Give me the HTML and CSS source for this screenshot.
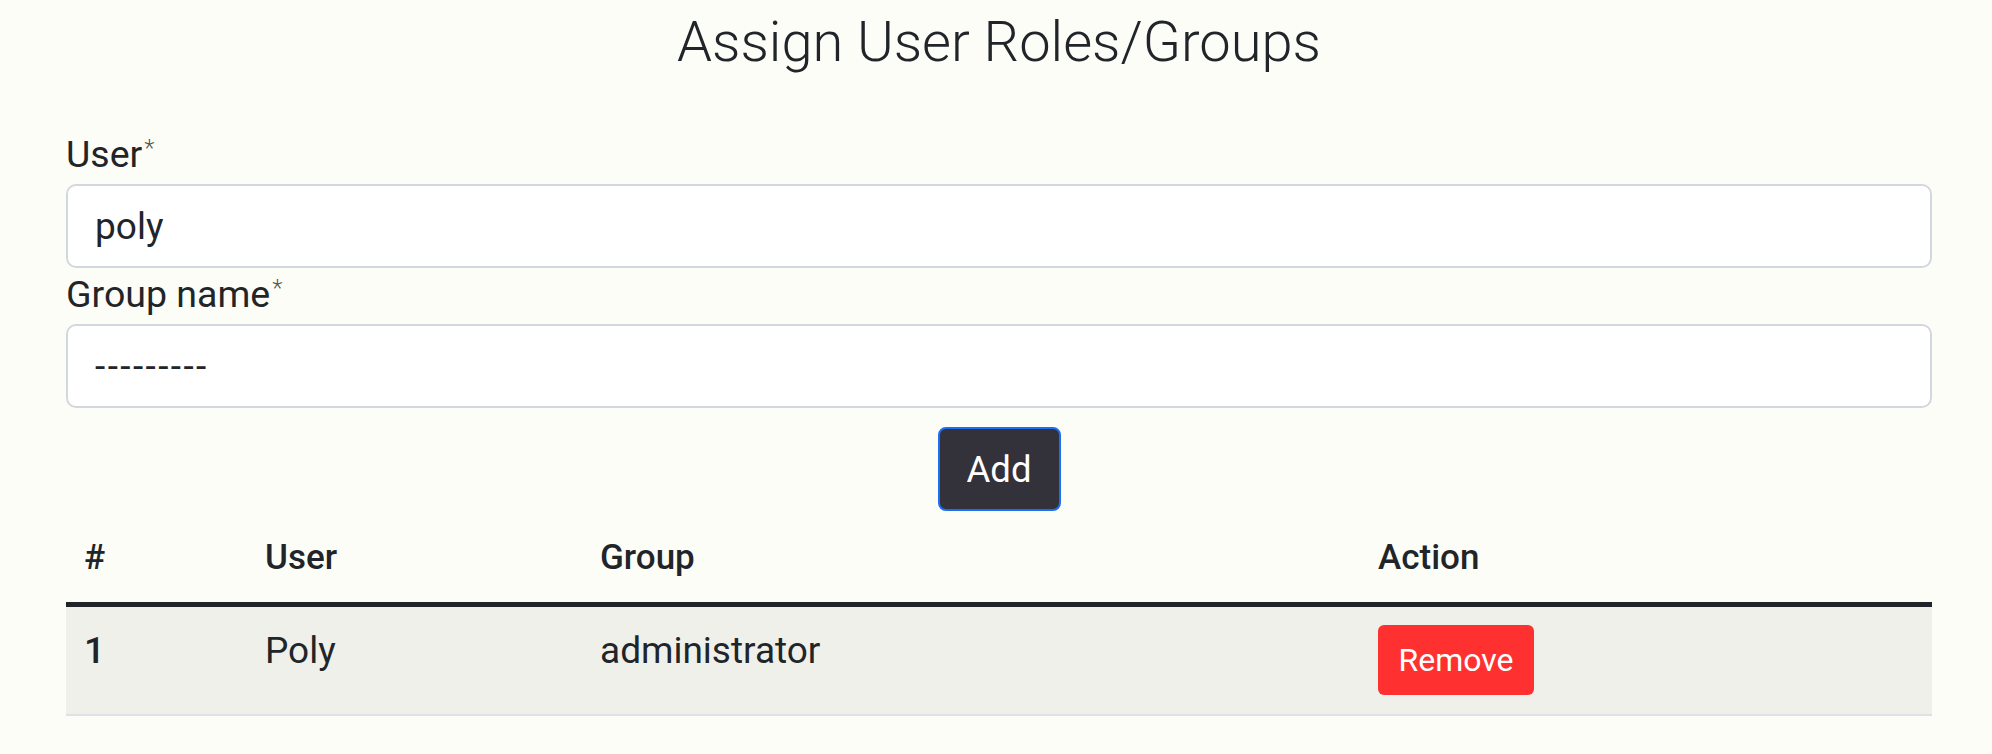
FILE: index.html
```html
<!DOCTYPE html>
<html lang="en">
<head>
<meta charset="utf-8">
<title>Assign User Roles/Groups</title>
<link rel="stylesheet" href="styles.css">
</head>
<body>
<div class="page">
  <h1 class="title">Assign User Roles/Groups</h1>
  <form class="form">
    <label class="label" for="user">User<span class="req">*</span></label>
    <input class="control" id="user" type="text" value="poly">
    <label class="label label-next" for="group">Group name<span class="req">*</span></label>
    <select class="control select" id="group">
      <option>---------</option>
    </select>
    <div class="actions">
      <button class="btn-add" type="button">Add</button>
    </div>
  </form>
  <table class="grid">
    <colgroup>
      <col class="c1"><col class="c2"><col class="c3"><col class="c4">
    </colgroup>
    <thead>
      <tr><th>#</th><th>User</th><th>Group</th><th>Action</th></tr>
    </thead>
    <tbody>
      <tr>
        <th class="rowhead">1</th>
        <td>Poly</td>
        <td>administrator</td>
        <td><button class="btn-remove" type="button">Remove</button></td>
      </tr>
    </tbody>
  </table>
</div>
</body>
</html>
```
FILE: styles.css
```css
body {
  margin: 0;
  background: #fdfdf8;
  font-family: Roboto, "Liberation Sans", sans-serif;
  color: #212529;
}

.page {
  padding: 9px 60px 40px 66px;
}

.title {
  margin: 0 0 57px;
  font-size: 56px;
  font-weight: 300;
  line-height: 66px;
  text-align: center;
}

.form {
  display: flex;
  flex-direction: column;
}

.label {
  font-size: 37.5px;
  line-height: 45px;
  margin-bottom: 7px;
}

.label-next {
  margin-top: 4px;
}

.req {
  font-size: 24px;
  font-weight: 300;
  color: #555;
  vertical-align: top;
  line-height: 32px;
  margin-left: 2px;
}

.control {
  box-sizing: border-box;
  width: 100%;
  height: 84px;
  border: 2px solid #d3d7de;
  border-radius: 10px;
  background: #fff;
  padding: 0 27px;
  font-family: Roboto, "Liberation Sans", sans-serif;
  font-size: 37px;
  color: #212529;
  outline: none;
}

.select {
  appearance: none;
  -webkit-appearance: none;
  letter-spacing: 2.4px;
}

.actions {
  display: flex;
  justify-content: center;
  margin-top: 19px;
}

.btn-add {
  box-sizing: border-box;
  width: 123px;
  height: 84px;
  background: #333139;
  color: #fff;
  border: 2px solid #1a6ff5;
  border-radius: 8px;
  font-family: Roboto, "Liberation Sans", sans-serif;
  font-size: 36.5px;
  padding: 0;
}

.grid {
  width: 100%;
  margin-top: 3px;
  border-collapse: collapse;
  table-layout: fixed;
}

.c1 { width: 181px; }
.c2 { width: 335px; }
.c3 { width: 778px; }

.grid thead th {
  text-align: left;
  font-size: 35px;
  font-weight: 500;
  line-height: 44px;
  padding: 22px 18px;
  border-bottom: 5px solid #212529;
}

.grid tbody tr {
  background: #f0f0eb;
  border-bottom: 2px solid #dee2e6;
}

.grid tbody td,
.grid tbody th {
  text-align: left;
  vertical-align: top;
  font-size: 37px;
  font-weight: 400;
  line-height: 51px;
  padding: 18px 18px 19px;
}

.grid tbody .rowhead {
  font-weight: 500;
}

.btn-remove {
  display: block;
  box-sizing: border-box;
  width: 156px;
  height: 70px;
  background: #ff3030;
  color: #fff;
  border: none;
  border-radius: 6px;
  font-family: Roboto, "Liberation Sans", sans-serif;
  font-size: 32px;
  padding: 0;
}
```
